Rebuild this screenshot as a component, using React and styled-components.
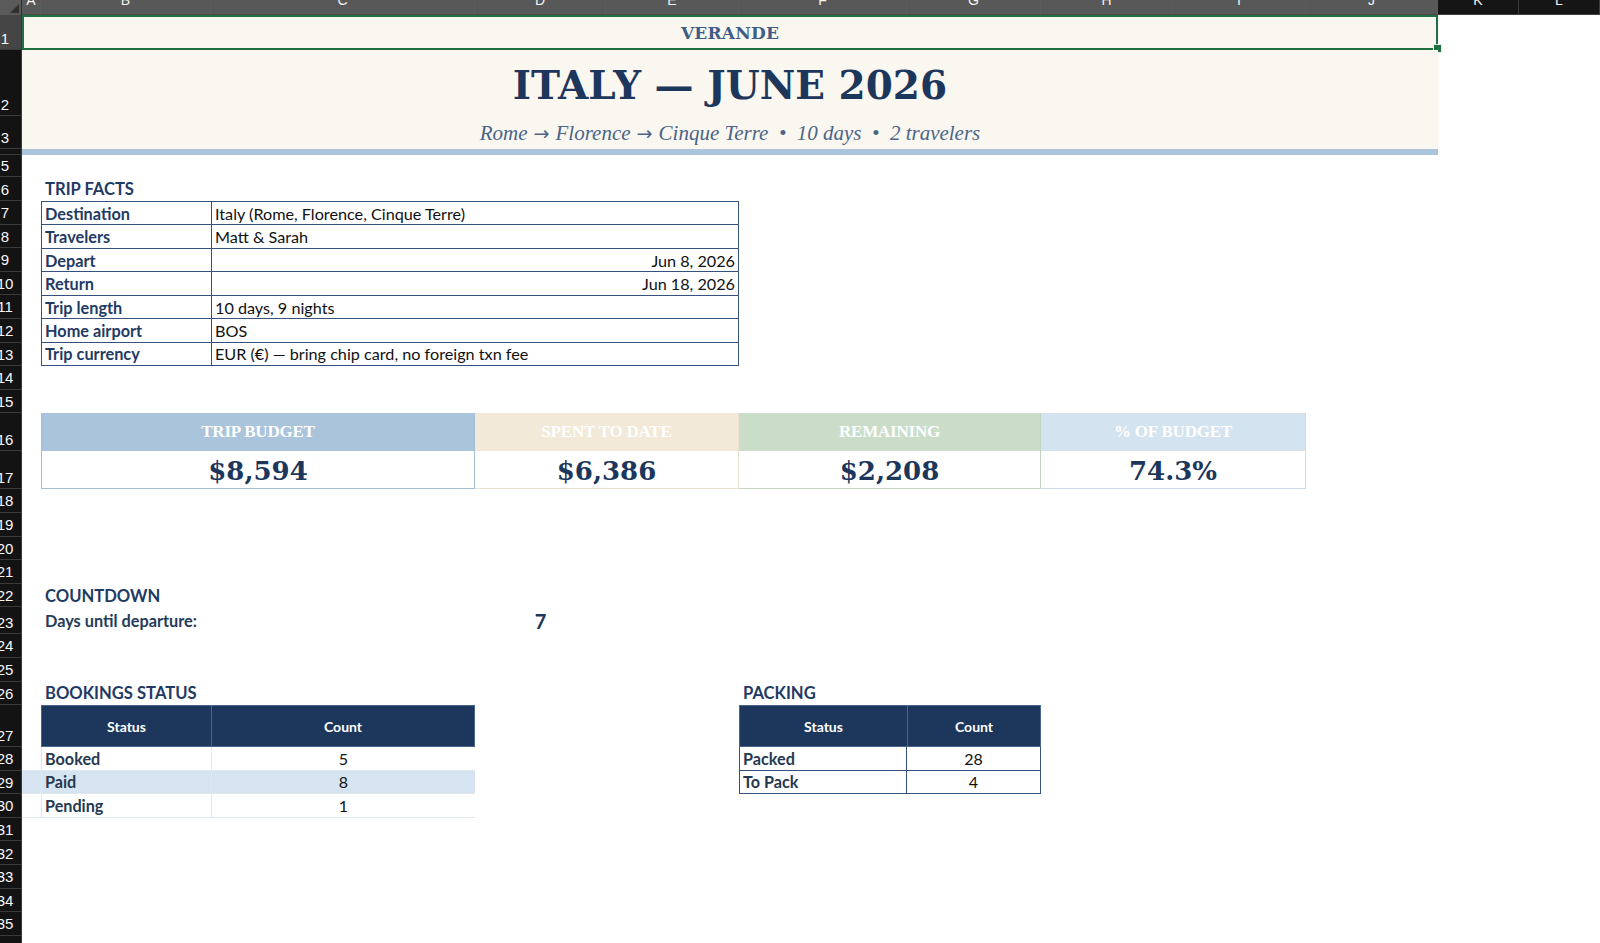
import React from 'react';
import styled, { createGlobalStyle, css } from 'styled-components';

const GlobalStyle = createGlobalStyle`
  html, body {
    margin: 0;
    padding: 0;
    background: #ffffff;
    overflow: hidden;
  }
  body {
    font-family: Lato, "Liberation Sans", sans-serif;
  }
`;

const COLS = ['A', 'B', 'C', 'D', 'E', 'F', 'G', 'H', 'I', 'J', 'K', 'L'];
const COL_WIDTHS = [19, 170, 264, 131, 133, 168, 134, 132, 133, 132, 81, 81];
const ROW_HEIGHTS = { 1: 35, 2: 66, 3: 33, 4: 6, 5: 22, 6: 24, 16: 38, 17: 38, 23: 27, 27: 42 };
const ROW_COUNT = 36;
const STD_ROW = 23.6;

const NAVY = '#1c365c';
const INK = '#1f3a63';

const col = (letter) => COLS.indexOf(letter) + 2;
const cols = (from, to = from) => `${col(from)} / ${col(to) + 1}`;
const rows = (from, to = from) => `${from + 1} / ${to + 2}`;

const placed = css`
  grid-column: ${(p) => p.$col};
  grid-row: ${(p) => p.$row};
  min-width: 0;
`;

const Sheet = styled.div`
  display: grid;
  grid-template-columns: 22px ${COL_WIDTHS.map((w) => `${w}px`).join(' ')};
  grid-template-rows: 15px ${Array.from({ length: ROW_COUNT }, (_, i) => `${ROW_HEIGHTS[i + 1] || STD_ROW}px`).join(' ')};
  width: 1600px;
  height: 943px;
  overflow: hidden;
  background: #ffffff;
`;

const Corner = styled.div`
  grid-column: 1;
  grid-row: 1;
  background: #5a5a5a;
  border-right: 1px solid #2c2c2c;
  position: relative;
  overflow: hidden;

  &::after {
    content: '';
    position: absolute;
    right: 2px;
    bottom: 2px;
    border-style: solid;
    border-width: 0 0 9px 9px;
    border-color: transparent transparent #2f2f2f transparent;
  }
`;

const ColHead = styled.div`
  grid-row: 1;
  grid-column: ${(p) => p.$col};
  background: ${(p) => (p.$active ? '#585858' : '#151515')};
  border-right: 1px solid ${(p) => (p.$active ? '#5b5b5b' : '#3d3d3d')};
  border-bottom: 1px solid ${(p) => (p.$active ? '#4a4a4a' : '#3d3d3d')};
  box-sizing: border-box;
  overflow: hidden;
  display: flex;
  justify-content: center;
  align-items: flex-start;
  color: #f2f2f2;
  font: 14px/14px "Liberation Sans", Arial, sans-serif;

  span {
    margin-top: -7px;
  }
`;

const RowHead = styled.div`
  grid-column: 1;
  grid-row: ${(p) => p.$row + 1};
  background: ${(p) => (p.$active ? '#454545' : '#131313')};
  border-bottom: 1px solid #3a3a3a;
  border-right: 1px solid #3a3a3a;
  box-sizing: border-box;
  overflow: hidden;
  display: flex;
  align-items: flex-end;
  padding-bottom: 1.5px;
  color: #f6f6f6;
  font: 15px/18px "Liberation Sans", Arial, sans-serif;
`;

const RowNum = styled.span`
  width: 10px;
  display: flex;
  justify-content: center;
  white-space: nowrap;
`;

const BannerRow = styled.div`
  ${placed}
  background: #faf7f0;
  display: flex;
  align-items: center;
  justify-content: center;
  position: relative;
  ${(p) =>
    p.$selected &&
    css`
      box-shadow: inset 0 0 0 2px #1f6f43;
    `}
`;

const FillHandle = styled.span`
  position: absolute;
  right: -4px;
  bottom: -3px;
  width: 7px;
  height: 7px;
  background: #1f6f43;
  border: 1px solid #e9efe9;
`;

const Brand = styled.div`
  font: bold 17px "DejaVu Serif", Georgia, serif;
  color: #3f5d86;
  letter-spacing: 0.2px;
`;

const Title = styled.h1`
  margin: 0;
  padding-top: 3px;
  font: bold 39px "DejaVu Serif", Georgia, serif;
  color: ${NAVY};
  white-space: nowrap;
`;

const Subtitle = styled.div`
  padding-top: 2px;
  font: italic 21px "Liberation Serif", "DejaVu Serif", serif;
  color: #4a6487;
  white-space: pre;
`;

const Arrow = styled.span`
  font: 19px "DejaVu Sans", sans-serif;
`;

const AccentBar = styled.div`
  ${placed}
  background: #a9c4db;
`;

const SectionLabel = styled.div`
  ${placed}
  display: flex;
  align-items: center;
  padding-left: 4px;
  white-space: nowrap;
  font-weight: 700;
  font-size: 16.6px;
  color: ${INK};
`;

const FactsTable = styled.div`
  ${placed}
  display: grid;
  grid-template-columns: 169px 1fr;
  grid-template-rows: repeat(7, 1fr);
  gap: 1px;
  background: #34527c;
  border: 1px solid #34527c;
`;

const FactLabel = styled.div`
  background: #ffffff;
  display: flex;
  align-items: center;
  padding: 0 3px;
  font-weight: 700;
  font-size: 16.3px;
  color: ${INK};
  white-space: nowrap;
`;

const FactValue = styled.div`
  background: #ffffff;
  display: flex;
  align-items: center;
  justify-content: ${(p) => (p.$align === 'right' ? 'flex-end' : 'flex-start')};
  padding: 0 3px;
  font-size: 16.2px;
  color: #111111;
  white-space: nowrap;
`;

const KpiCard = styled.div`
  ${placed}
  display: grid;
  grid-template-rows: 1fr 1fr;
  border: 1px solid ${(p) => p.$line};
  border-top: none;
  border-left-width: ${(p) => (p.$first ? '1px' : '0')};
`;

const KpiHead = styled.div`
  background: ${(p) => p.$tone};
  display: flex;
  align-items: center;
  justify-content: center;
  font: bold 17px "Liberation Serif", "Times New Roman", serif;
  color: #ffffff;
  letter-spacing: -0.2px;
`;

const KpiValue = styled.div`
  background: #ffffff;
  display: flex;
  align-items: center;
  justify-content: center;
  padding-top: 2px;
  font: bold 26px "DejaVu Serif", Georgia, serif;
  color: ${NAVY};
`;

const CountdownLabel = styled.div`
  ${placed}
  display: flex;
  align-items: center;
  padding-left: 4px;
  white-space: nowrap;
  font-weight: 700;
  font-size: 16.3px;
  color: #253b5a;
`;

const CountdownValue = styled.div`
  ${placed}
  display: flex;
  align-items: center;
  justify-content: center;
  font-weight: 700;
  font-size: 20px;
  color: ${NAVY};
`;

const HeadRow = styled.div`
  ${placed}
  display: grid;
  grid-template-columns: ${(p) => p.$cols};
  background: ${NAVY};
  border: 1px solid #46658f;
`;

const HeadCell = styled.div`
  display: flex;
  align-items: center;
  justify-content: center;
  font-weight: 700;
  font-size: 14px;
  color: #ffffff;
  & + & {
    border-left: 1px solid #46658f;
  }
`;

const DataRow = styled.div`
  ${placed}
  display: grid;
  grid-template-columns: ${(p) => p.$cols};
  background: ${(p) => (p.$shade ? '#d6e4f1' : '#ffffff')};
  border-bottom: 1px solid ${(p) => p.$rule};
  ${(p) =>
    p.$boxed &&
    css`
      border-left: 1px solid ${p.$rule};
      border-right: 1px solid ${p.$rule};
    `}
`;

const DataCell = styled.div`
  display: flex;
  align-items: center;
  white-space: nowrap;
  ${(p) =>
    p.$divider &&
    css`
      border-left: 1px solid ${p.$divider};
    `}
  ${(p) =>
    p.$label
      ? css`
          padding-left: 3px;
          font-weight: 700;
          font-size: 16.2px;
          color: #25394f;
        `
      : css`
          justify-content: center;
          font-size: 16px;
          color: #111111;
        `}
`;

const FACTS = [
  ['Destination', 'Italy (Rome, Florence, Cinque Terre)'],
  ['Travelers', 'Matt & Sarah'],
  ['Depart', 'Jun 8, 2026', 'right'],
  ['Return', 'Jun 18, 2026', 'right'],
  ['Trip length', '10 days, 9 nights'],
  ['Home airport', 'BOS'],
  ['Trip currency', 'EUR (€) — bring chip card, no foreign txn fee'],
];

const KPIS = [
  { label: 'TRIP BUDGET', value: '$8,594', from: 'B', to: 'C', tone: '#a9c4db', line: '#a3bdd6' },
  { label: 'SPENT TO DATE', value: '$6,386', from: 'D', to: 'E', tone: '#f3e9d9', line: '#ece1cf' },
  { label: 'REMAINING', value: '$2,208', from: 'F', to: 'G', tone: '#c9ddc9', line: '#c2d3c2' },
  { label: '% OF BUDGET', value: '74.3%', from: 'H', to: 'I', tone: '#d4e3f0', line: '#cbdbe9' },
];

const ROUTE = ['Rome', 'Florence', 'Cinque Terre'];

const BOOKINGS = [
  { status: 'Booked', count: 5 },
  { status: 'Paid', count: 8, shade: true },
  { status: 'Pending', count: 1 },
];

const PACKING = [
  { status: 'Packed', count: 28 },
  { status: 'To Pack', count: 4 },
];

const SOFT_RULE = '#e1e7ee';
const NAVY_RULE = '#34527c';

export default function App() {
  return (
    <>
      <GlobalStyle />
      <Sheet>
        <Corner />
        {COLS.map((c, i) => (
          <ColHead key={c} $col={i + 2} $active={i < 10}>
            <span>{c}</span>
          </ColHead>
        ))}
        {Array.from({ length: ROW_COUNT }, (_, i) => i + 1).map((r) => (
          <RowHead key={r} $row={r} $active={r === 1}>
            <RowNum>{r === 4 ? '' : r}</RowNum>
          </RowHead>
        ))}

        <BannerRow $col={cols('A', 'J')} $row={rows(1)} $selected>
          <Brand>VERANDE</Brand>
          <FillHandle />
        </BannerRow>
        <BannerRow $col={cols('A', 'J')} $row={rows(2)}>
          <Title>ITALY — JUNE 2026</Title>
        </BannerRow>
        <BannerRow $col={cols('A', 'J')} $row={rows(3)}>
          <Subtitle>
            {ROUTE.map((stop, i) => (
              <React.Fragment key={stop}>
                {i > 0 && <Arrow>{' → '}</Arrow>}
                {stop}
              </React.Fragment>
            ))}
            {'  •  10 days  •  2 travelers'}
          </Subtitle>
        </BannerRow>
        <AccentBar $col={cols('A', 'J')} $row={rows(4)} />

        <SectionLabel $col={cols('B', 'C')} $row={rows(6)}>TRIP FACTS</SectionLabel>
        <FactsTable $col={cols('B', 'E')} $row={rows(7, 13)}>
          {FACTS.map(([label, value, align]) => (
            <React.Fragment key={label}>
              <FactLabel>{label}</FactLabel>
              <FactValue $align={align}>{value}</FactValue>
            </React.Fragment>
          ))}
        </FactsTable>

        {KPIS.map((k, i) => (
          <KpiCard key={k.label} $col={cols(k.from, k.to)} $row={rows(16, 17)} $line={k.line} $first={i === 0}>
            <KpiHead $tone={k.tone}>{k.label}</KpiHead>
            <KpiValue>{k.value}</KpiValue>
          </KpiCard>
        ))}

        <SectionLabel $col={cols('B', 'C')} $row={rows(22)}>COUNTDOWN</SectionLabel>
        <CountdownLabel $col={cols('B', 'C')} $row={rows(23)}>Days until departure:</CountdownLabel>
        <CountdownValue $col={cols('D')} $row={rows(23)}>7</CountdownValue>

        <SectionLabel $col={cols('B', 'C')} $row={rows(26)}>BOOKINGS STATUS</SectionLabel>
        <HeadRow $col={cols('B', 'C')} $row={rows(27)} $cols="169px 1fr">
          <HeadCell>Status</HeadCell>
          <HeadCell>Count</HeadCell>
        </HeadRow>
        {BOOKINGS.map((b, i) => (
          <DataRow key={b.status} $col={cols('A', 'C')} $row={rows(28 + i)} $cols="19px 170px 1fr" $shade={b.shade} $rule={SOFT_RULE}>
            <DataCell />
            <DataCell $label $divider={SOFT_RULE}>{b.status}</DataCell>
            <DataCell $divider={SOFT_RULE}>{b.count}</DataCell>
          </DataRow>
        ))}

        <SectionLabel $col={cols('F', 'G')} $row={rows(26)}>PACKING</SectionLabel>
        <HeadRow $col={cols('F', 'G')} $row={rows(27)} $cols="167px 1fr">
          <HeadCell>Status</HeadCell>
          <HeadCell>Count</HeadCell>
        </HeadRow>
        {PACKING.map((p, i) => (
          <DataRow key={p.status} $col={cols('F', 'G')} $row={rows(28 + i)} $cols="166px 1fr" $rule={NAVY_RULE} $boxed>
            <DataCell $label>{p.status}</DataCell>
            <DataCell $divider={NAVY_RULE}>{p.count}</DataCell>
          </DataRow>
        ))}
      </Sheet>
    </>
  );
}
